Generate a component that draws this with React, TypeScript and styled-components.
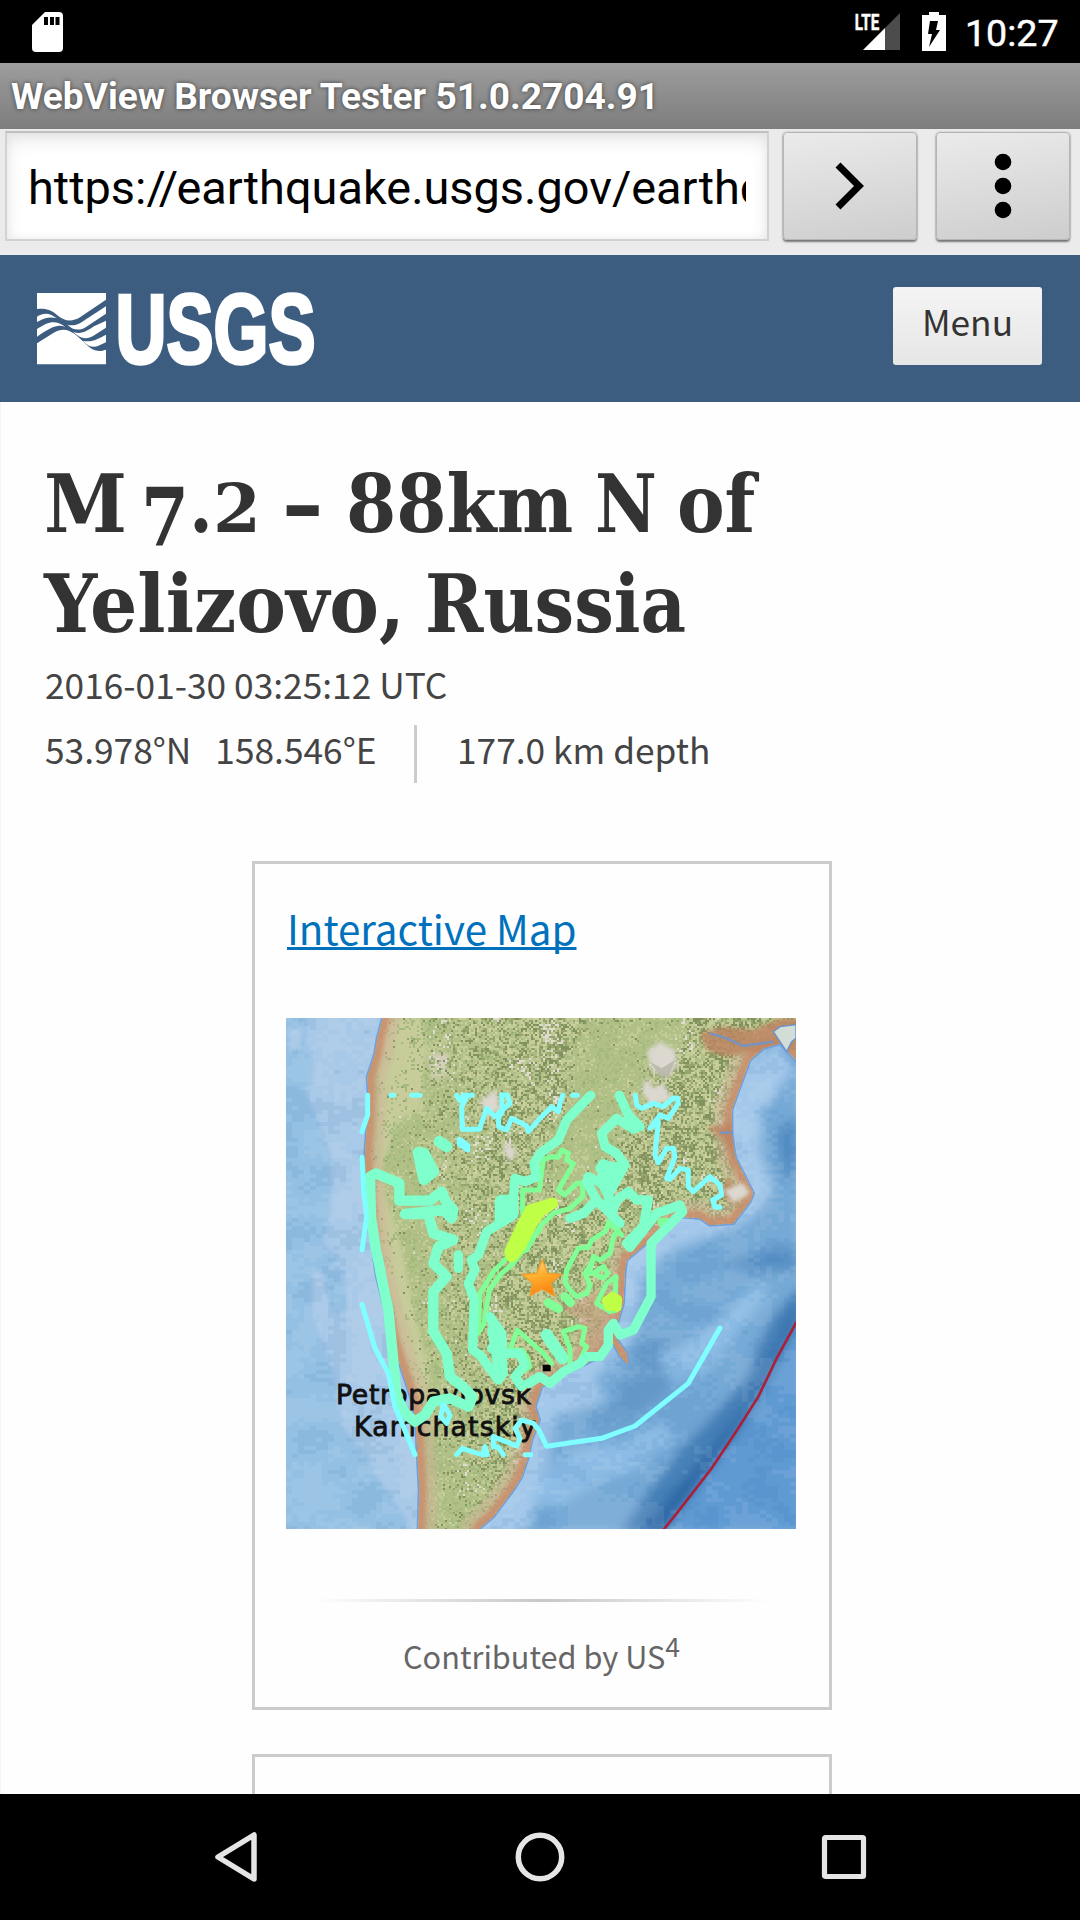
import React from "react";
import styled, { createGlobalStyle } from "styled-components";

const GlobalStyle = createGlobalStyle`
  html, body { margin: 0; padding: 0; background: #000; }
  * { box-sizing: border-box; }
`;

const body = `"Noto Sans CJK SC", "Noto Sans", sans-serif`;
const system = `Roboto, "Noto Sans", sans-serif`;

const Screen = styled.div`
  width: 1080px;
  height: 1920px;
  display: flex;
  flex-direction: column;
  overflow: hidden;
  background: #fefefe;
`;

const StatusBar = styled.div`
  flex: none;
  height: 63px;
  display: flex;
  align-items: center;
  padding: 0 21px 0 32px;
  background: #000;
  color: #fff;
`;

const StatusIcons = styled.div`
  margin-left: auto;
  display: flex;
  align-items: center;
  svg { overflow: visible; }
`;

const Clock = styled.span`
  width: 94px;
  margin-left: 19px;
  padding-top: 3px;
  font: 400 37.6px/44px ${system};
  -webkit-text-stroke: 0.5px #fff;
`;

const TitleBar = styled.div`
  flex: none;
  height: 66px;
  padding: 1px 11px 0;
  background: linear-gradient(#9d9d9d, #7d7d7d);
  color: #fff;
  font: 700 37.05px/65px ${system};
  text-shadow: 0 0 4px rgba(40, 40, 40, 0.8);
  white-space: nowrap;
`;

const AddressBar = styled.div`
  flex: none;
  height: 126px;
  display: flex;
  align-items: flex-start;
  padding: 2px 9px 0 5px;
  background: #ebebeb;
`;

const UrlField = styled.div`
  width: 764px;
  height: 110px;
  padding: 0 21px;
  border: 2px solid #d2d2d2;
  border-top-color: #bfbfbf;
  background: #fff;
  box-shadow: inset 0 8px 20px -4px #dedede, inset 0 0 10px #f0f0f0;
`;

const UrlText = styled.div`
  overflow: hidden;
  white-space: nowrap;
  color: #000;
  font: 400 46.9px/110px ${system};
`;

const Slashes = styled.span`
  letter-spacing: -1.8px;
`;

const ToolButton = styled.button<{ $gap: number }>`
  width: 134px;
  height: 108px;
  margin: 1px 0 0 ${(p) => p.$gap}px;
  padding: 0;
  display: flex;
  align-items: center;
  justify-content: center;
  border: 1px solid #b5b5b5;
  border-radius: 4px;
  background: linear-gradient(170deg, #ebebeb, #cdcdcd);
  box-shadow: 0 2px 2px #777, 0 0 2px #aaa;
`;

const SiteHeader = styled.header`
  flex: none;
  height: 147px;
  display: flex;
  align-items: flex-start;
  justify-content: space-between;
  padding: 32px 38px 0 37px;
  background: #3d5d80;
`;

const Logo = styled.svg`
  margin-top: 3px;
  overflow: visible;
`;

const MenuButton = styled.button`
  width: 149px;
  height: 78px;
  padding: 0 0 11px;
  border: 0;
  border-radius: 3px;
  background: linear-gradient(#f4f4f4, #e6e6e6);
  color: #333;
  font: 400 35.3px/60px ${body};
`;

const Page = styled.main`
  flex: 1;
  min-height: 0;
  overflow: hidden;
  padding: 52px 45px 0 43px;
  display: flex;
  flex-direction: column;
  border-left: 1px solid #f5f5f5;
`;

const Heading = styled.h1`
  margin: 0;
  color: #333;
  font: 700 80px/100px "DejaVu Serif Condensed", "DejaVu Serif", serif;
`;

const HeadingLine = styled.span`
  display: flex;
  white-space: pre;
`;

const Word = styled.span<{ $advance: number; $scale: number }>`
  flex: none;
  width: ${(p) => p.$advance}px;
  transform: scaleX(${(p) => p.$scale});
  transform-origin: left;
`;

const OldSeven = styled.span`
  display: inline-block;
  line-height: 0;
  transform: translateY(14px);
`;

const OldTwo = styled.span`
  display: inline-block;
  line-height: 0;
  transform: scaleY(0.84);
  transform-origin: 50% 28px;
`;

const Meta = styled.div`
  flex: none;
  height: 58px;
  padding-left: 1px;
  color: #444;
  font: 400 35.3px/59px ${body};
  white-space: pre;
`;

const Location = styled(Meta)`
  margin-top: 13px;
  display: flex;
  line-height: 47px;
`;

const Coordinates = styled.div`
  width: 372px;
  display: flex;
  gap: 24px;
  border-right: 3px solid #ccc;
  margin-right: 40px;
`;

const Card = styled.section`
  flex: none;
  width: 580px;
  margin: 78px 0 0 208px;
  padding: 34px 31px 26px;
  border: 3px solid #ccc;
  background: #fefefe;

  & + & {
    height: 400px;
    margin-top: 44px;
  }
`;

const MapLink = styled.a`
  display: block;
  width: max-content;
  height: 60px;
  margin-left: 1px;
  color: #0071bc;
  font: 400 40.3px/60px ${body};
  text-decoration: underline;
  text-decoration-thickness: 3px;
  text-underline-offset: 2px;
  text-decoration-skip-ink: none;
`;

const MapFrame = styled.div`
  width: 510px;
  height: 511px;
  margin-top: 60px;
  svg { display: block; }
`;

const Rule = styled.div`
  height: 3px;
  margin: 70px 29px 29px;
  background: linear-gradient(90deg, transparent, #c8c8c8, transparent);
`;

const Credit = styled.div`
  height: 50px;
  padding-right: 1px;
  text-align: center;
  color: #666;
  font: 400 30.7px/50px ${body};
  sup { font-size: 26.5px; line-height: 0; vertical-align: 12.5px; }
`;

const NavBar = styled.nav`
  flex: none;
  height: 126px;
  display: flex;
  align-items: center;
  justify-content: space-between;
  padding: 0 211px;
  background: #000;
`;

const SdCard = () => (
  <svg width="31" height="40" viewBox="0 0 31 40">
    <path fill="#fff" d="M13 0H27a4 4 0 0 1 4 4V36a4 4 0 0 1-4 4H4a4 4 0 0 1-4-4V13Z" />
    <path fill="#000" d="M12 5h4v8h-4zM18 5h4v8h-4zM23.5 5h4v8h-4z" />
  </svg>
);

const Signal = () => (
  <svg width="47" height="38" viewBox="0 0 47 38">
    <path fill="#4c4c4c" d="M46 0V37H31V15Z" />
    <path fill="#fff" d="M9 37 31 15V37Z" />
    <text x="0.8" y="17" fill="#fff" stroke="#fff" strokeWidth=".5" fontFamily="Roboto, sans-serif" fontWeight="700" fontSize="22.5" textLength="24.5" lengthAdjust="spacingAndGlyphs">LTE</text>
  </svg>
);

const Battery = () => (
  <svg width="24" height="39" viewBox="0 0 24 39" style={{ marginLeft: 21 }}>
    <path fill="#fff" d="M7 0H17V3H24V39H0V3H7Z" />
    <path fill="#000" d="M8 9H16L14 18H18L7 35 10 22H6Z" />
  </svg>
);

const UsgsLogo = () => (
  <Logo width="282" height="76" viewBox="0 0 282 76">
    <g fill="#fff" transform="translate(-37 -40) scale(.33333)">
      <path d="M111 129H318V149L240 202C215 217 193 214 170 194C150 178 135 175 111 177Z" />
      <path d="M111 200C135 184 152 192 170 204C150 200 135 202 111 216Z" />
      <path d="M111 237C145 216 163 208 196 230C170 222 155 230 111 260Z" />
      <path d="M111 280L160 249C185 234 204 237 225 253C262 282 275 314 318 299V343H111Z" />
      <path d="M202 224C228 231 245 216 265 203L318 169V191L258 231C238 244 218 240 202 224Z" />
      <path d="M219 245C243 255 262 243 282 229L318 212V233L278 259C255 270 238 264 219 245Z" />
      <path d="M248 272C275 279 294 266 318 254V277L292 289C275 293 260 286 248 272Z" />
    </g>
    <text x="78.5" y="73" fill="#fff" stroke="#fff" strokeWidth="3.6" fontFamily="'Liberation Sans', Arial, sans-serif" fontWeight="700" fontSize="98.5" textLength="200" lengthAdjust="spacingAndGlyphs">USGS</text>
  </Logo>
);

const CELL = 6;
const COAST =
  "M330 -120L308 24 292 85 285 130 272 170 262 200 265 250 262 330 255 430 258 520 268 620 278 720 290 800 315 900 340 1000 365 1080 395 1170 408 1240 412 1330 418 1440 415 1554V1700H560L600 1554 640 1520 700 1440 725 1400 745 1340 755 1290 778 1230 765 1190 785 1130 820 1110 880 1080 940 1050 1000 1000 1022 1040 1045 1065 1040 1030 1005 980 1015 930 1030 880 1035 780 1040 750 1100 700 1140 670 1200 620 1260 625 1290 645 1360 640 1410 575 1420 550 1395 500 1365 440 1355 370 1355 300 1380 230 1410 150 1450 115 1500 100 1548 150H1700V-120Z";

const hash = (x: number, y: number, s: number) => {
  let h = (x * 374761393 + y * 668265263 + s * 974634777) | 0;
  h = Math.imul(h ^ (h >>> 13), 1274126177);
  return ((h ^ (h >>> 16)) >>> 0) / 4294967296;
};

const smooth = (x: number, y: number, s: number) => {
  const ix = Math.floor(x);
  const iy = Math.floor(y);
  const fx = x - ix;
  const fy = y - iy;
  const a = hash(ix, iy, s) * (1 - fx) + hash(ix + 1, iy, s) * fx;
  const b = hash(ix, iy + 1, s) * (1 - fx) + hash(ix + 1, iy + 1, s) * fx;
  return a * (1 - fy) + b * fy;
};

const bump = (x: number, y: number, cx: number, cy: number, rx: number, ry: number) =>
  Math.max(0, 1 - ((x - cx) / rx) ** 2 - ((y - cy) / ry) ** 2);

/* Relief shading: one path of small squares for each tone of the terrain. */
const buildRelief = () => {
  const tones: Record<string, string[]> = {};
  const put = (tone: string, x: number, y: number) =>
    (tones[tone] = tones[tone] || []).push(`M${x} ${y}h6v6h-6z`);
  for (let y = 24; y < 1556; y += CELL) {
    for (let x = 250; x < 1548; x += CELL) {
      const valley = bump(x, y, 985, 200, 150, 230) + bump(x, y, 900, 430, 110, 190) + bump(x, y, 1140, 60, 100, 90);
      const west = Math.max(0, Math.min(1, (x - 380 - Math.max(0, y - 850) * 0.12) / 320));
      const rough = Math.max(0.06, west * (1 - valley * 1.6)) * (0.5 + smooth(x / 70, y / 70, 4) * 0.6);
      const r = hash(x, y, 1);
      if (r < rough) {
        const t = hash(x, y, 2) * 0.55 + smooth(x / 15, y / 15, 7) * 0.45;
        const high = smooth(x / 55, y / 55, 9) + bump(x, y, 650, 270, 70, 100) * 0.3 + bump(x, y, 480, 170, 60, 60) * 0.3;
        if (t < 0.34) put("#82925f", x, y);
        else if (t < 0.5) put("#96a56d", x, y);
        else if (t < 0.66) put("#c0ca94", x, y);
        else if (high > 0.7) put("#e0dbd0", x, y);
        else if (t < 0.8) put("#cccfa0", x, y);
        else put("#a8b981", x, y);
      } else if (hash(x, y, 6) < 0.24) {
        put(smooth(x / 40, y / 40, 3) > 0.5 ? "#c3cb97" : "#a3b97d", x, y);
      }
    }
  }
  return Object.entries(tones).map(([fill, d]) => ({ fill, d: d.join("") }));
};

const buildSea = () => {
  const tones: Record<string, string[]> = { "#ffffff": [], "#2565a8": [] };
  for (let y = 24; y < 1556; y += 12) {
    for (let x = 18; x < 1548; x += 18) {
      const n = smooth(x / 80, y / 60, 12) + (hash(x, y, 8) - 0.5) * 0.3;
      if (n > 0.6) tones["#ffffff"].push(`M${x} ${y}h18v12h-18z`);
      if (n < 0.33) tones["#2565a8"].push(`M${x} ${y}h18v12h-18z`);
    }
  }
  return Object.entries(tones).map(([fill, d]) => ({ fill, d: d.join("") }));
};

const relief = buildRelief();
const sea = buildSea();

const EarthquakeMap = () => (
  <svg width="510" height="511" viewBox="18 24 1530 1533" preserveAspectRatio="none">
    <defs>
      <clipPath id="land"><path d={COAST} /></clipPath>
      <filter id="soft" x="-20%" y="-20%" width="140%" height="140%"><feGaussianBlur stdDeviation="16" /></filter>
      <filter id="haze" x="-20%" y="-20%" width="140%" height="140%"><feGaussianBlur stdDeviation="7" /></filter>
      <linearGradient id="star" x1="0" y1="0" x2="0.3" y2="1">
        <stop offset="0" stopColor="#ffe08a" /><stop offset=".5" stopColor="#ffb02e" /><stop offset="1" stopColor="#f98512" />
      </linearGradient>
    </defs>
    <rect x="18" y="24" width="1530" height="1533" fill="#a9c9e8" />
    <g filter="url(#haze)" fill="#94c0e3">
      <path d="M0 0H75L80 90 105 150 100 215 70 235 95 290 130 370 155 430 155 600 130 700 175 740 135 790 95 900 130 1000 160 1090 190 1250 250 1330 290 1400 360 1500 400 1560H0Z" />
      <path d="M110 780H190L205 900 170 910 130 860Z" />
    </g>
    <path filter="url(#haze)" fill="#adcbe9" d="M30 60L70 50 60 110 30 130ZM95 780L130 790 150 900 100 910Z" />
    <g filter="url(#soft)">
      <path fill="#75a9d6" d="M1450 100L1560 80V1570H700L760 1400 785 1130 1000 1000 1045 740 1200 620 1360 640 1420 550 1360 380 1370 230Z" />
      <path fill="#a3c8ea" d="M1370 200L1500 100 1540 180 1450 300 1430 420 1480 540 1410 630 1260 690 1150 730 1080 800 1080 900 1040 1020 940 1110 980 1170 830 1210 820 1300 800 1400 740 1570 600 1560 745 1340 785 1130 1000 1000 1040 740 1200 620 1360 640 1420 550 1360 380Z" />
      <path fill="#5690c5" d="M1480 370L1560 310V480L1510 520ZM1320 760L1500 710 1560 740V780L1400 790Z" />
      <path fill="#699dcb" d="M1090 980L1180 990 1240 1030 1320 1000 1200 1110 1130 1170 1040 1230 930 1240 900 1220 1000 1190Z" />
      <path fill="#8cbce5" d="M1130 1030L1210 1010 1330 920 1420 830 1480 820 1400 930 1290 1080 1180 1130ZM830 1340L1020 1290 1140 1240 1190 1290 1080 1370 920 1430 810 1500 760 1460Z" />
      <path fill="#4780b8" d="M1570 820L1470 930 1400 1100 1290 1230 1200 1320 1080 1480 1020 1570H1170L1300 1400 1430 1180 1570 950Z" />
      <path fill="#2c66a4" d="M1560 880L1500 990 1400 1190 1290 1320 1180 1450 1090 1560H1150L1290 1390 1400 1220 1550 930Z" />
      <path fill="#5f9ad3" d="M1570 910L1440 1160 1340 1310 1150 1570H1570Z" />
    </g>
    <g shapeRendering="crispEdges">
      {sea.map((t) => <path key={t.fill} d={t.d} fill={t.fill} opacity=".08" />)}
    </g>
    <path d={COAST} fill="none" stroke="#6f9fdc" strokeWidth="10" />
    <g clipPath="url(#land)">
      <rect x="18" y="24" width="1530" height="1533" fill="#b0c086" />
      <path filter="url(#haze)" fill="#c8cc9b" d="M300 20H420L440 100 420 300 350 330 300 500 360 700 400 900 450 1100 420 1200 360 1000 290 700Z" />
      <path filter="url(#haze)" fill="#d4cebb" d="M445 130L510 130 500 200 455 210Z" />
      <g shapeRendering="crispEdges">
        {relief.map((t) => <path key={t.fill} d={t.d} fill={t.fill} />)}
      </g>
      <path d={COAST} fill="none" stroke="#cfb39a" strokeWidth="105" opacity=".5" filter="url(#haze)" />
      <path d={COAST} fill="none" stroke="#c98d6c" strokeWidth="44" opacity=".85" filter="url(#haze)" />
      <path fill="#bd8562" filter="url(#haze)" opacity=".85" d="M1260 70L1330 50 1420 60 1500 24H1560V120L1400 130 1340 140 1280 120ZM1360 340L1280 350 1340 400 1380 470ZM1380 590L1350 500 1310 550Z" />
      <path fill="#c79b81" filter="url(#haze)" opacity=".6" d="M830 890L880 880 980 830 1010 930 950 1020 880 1060 900 930Z" />
      <g fill="#dcd8d0" filter="url(#haze)">
        <path d="M1100 125L1140 95 1185 120 1192 165 1165 205 1115 180ZM1085 240L1100 200 1120 235 1150 220 1180 270 1110 285ZM1330 540L1390 520 1410 550 1360 580ZM600 270L650 240 660 300 620 320ZM680 390L710 430 690 460 670 420Z" />
      </g>
      <g fill="#aaa69d"><path d="M1110 155L1145 175 1185 150 1168 195 1145 205Z" opacity=".6" /></g>
    </g>
    <path fill="#d2ddd5" stroke="#6591cf" strokeWidth="4" d="M1480 65L1500 50 1548 44V85L1535 95 1520 125 1500 95Z" />
    <path fill="none" stroke="#7693c4" strokeWidth="7" d="M1290 70L1340 85 1390 108 1480 95M1320 368H1360" />
    <path fill="none" stroke="#ab2039" strokeWidth="8" d="M1550 935L1490 1045 1435 1160 1365 1270 1295 1375 1190 1510 1150 1560" />

    <g fill="#111" stroke="#111" strokeWidth="2.5" fontFamily="'DejaVu Sans', sans-serif" fontSize="80">
      <text x="168" y="1183" textLength="585" lengthAdjust="spacing">Petropavlovsk</text>
      <text x="222" y="1277" textLength="545" lengthAdjust="spacing">Kamchatskiy</text>
    </g>
    <path fill="#000" d="M788 1064H812V1084H788Z" />

    <g fill="none" strokeLinecap="round" strokeLinejoin="round">
      <g stroke="#7fff95" strokeWidth="15">
        <path d="M728 610V540H778L790 450 810 440 835 442 845 420 865 430 860 450 880 462 835 540 853 555 890 520 908 520 908 560 870 595 820 610 780 650 740 720 680 745 640 785 600 850 594 970 612 940 628 840 665 790 700 760 740 700 780 660" />
        <path d="M860 780L895 715 925 712 935 690 975 665 985 640 1015 660 1000 680 990 730 960 750 940 740 928 790M985 635L1025 675M860 780L855 815 870 840 890 860 920 850 930 825 915 790 940 750M940 790L970 770 985 790 970 805Z" />
        <path d="M950 880L980 820 1008 800 1005 870 1010 900 990 905Z" />
        <path d="M690 1020L712 960 745 990 790 1030 815 1060M690 1020L725 1020 740 1040 750 1070 735 1080M850 965L895 950 915 955 905 1000 920 1010 890 1070 870 1065 870 1015Z" />
      </g>
      <path stroke="#7fff95" strokeWidth="26" d="M804 878L836 896M855 860L872 878M1145 636L1160 636 1155 650Z" />
      <g stroke="#7fffcb" strokeWidth="28">
        <path strokeWidth="31" d="M302 785L288 720 273 620 270 500 287 490 358 520 358 572H450L485 545 498 575 520 600 515 625 490 600 375 612H445L460 670 520 690 475 710 460 760 500 800 460 845V965L500 1030 510 1100 548 1130 578 1160 565 1190 510 1165 460 1175 435 1215 405 1235 375 1210 350 1160 335 1000 325 900 300 780" />
        <path d="M415 428L432 430 460 485 432 508ZM478 395L500 410" strokeWidth="34" />
        <path d="M932 256L860 330 835 390 780 430 762 460 770 500 735 515 705 505 700 570 665 575 660 640 695 600 660 640 620 665 595 735 575 750 585 780 565 820 583 870 578 1020 600 1035 640 1090 655 1110 670 1090 665 1020 635 1015 660 990 630 920 665 970 670 1030 720 1030 735 1065 705 1100 725 1130" />
        <path d="M665 575H695V610L665 630Z" strokeWidth="42" />
        <path d="M1018 256L1045 315 1080 350 1060 357 1010 325 965 370 975 410 1010 430 1035 465 1010 510 985 555 965 520 925 500 920 515 950 570 910 610 870 625M960 475L1010 470 985 560M950 570L1020 640M980 580L1000 600 1010 570 1045 545 1070 570 1105 570 1090 650 1040 700 1050 712 1130 610 1200 585 1208 605 1113 700V860L1060 960 1020 975 1000 940 985 960 985 1005 960 1040 920 1040 900 1060 850 1085 810 1120 780 1100 745 1120" />
        <path strokeWidth="36" d="M970 465L1010 480 970 520ZM800 975L848 1045M640 960L660 1080" />
        <path d="M535 735V775" />
      </g>
      <path stroke="#bfff45" strokeWidth="34" d="M752 600L725 650 690 725 695 740 720 710 755 640 780 605 818 580Z" fill="#bfff45" />
      <path stroke="#bfff45" strokeWidth="25" fill="#bfff45" d="M978 872L998 858 1014 868 1012 892 985 890Z" />
      <g stroke="#7fffff" strokeWidth="15">
        <path d="M263 256V315L246 365M246 442L252 550 260 620 246 720M246 883L285 1015 325 1090 345 1190 405 1334M333 256H341M395 256H420M530 256L540 272 550 256H577M560 262L545 290 547 358H598L620 295 645 320 690 280 682 255H665L667 305 655 325 656 350 680 360 695 325 740 348 745 365 780 325 815 290 835 305 840 280 848 256M878 256H892" />
        <path d="M538 388L563 406V420L538 402ZM1066 256L1070 285 1085 295 1120 280 1150 290 1180 264H1192L1195 280 1165 325 1140 315 1110 355 1135 335 1125 435 1135 458 1160 415 1180 415 1185 440 1160 505 1170 508 1200 475 1225 480V530L1240 545 1290 500 1320 525 1325 555 1298 570 1305 592H1320" />
        <path d="M490 1182L510 1215 500 1240 482 1220ZM530 1334L547 1315 598 1332M608 1334L615 1310 622 1334ZM670 1334L655 1312 640 1310V1280L710 1308 720 1285 705 1255 725 1230 760 1240 777 1260 800 1309 965 1285 1065 1248 1225 1120 1320 954M735 1334H752" />
      </g>
    </g>
    <path fill="url(#star)" stroke="#f39a2c" strokeWidth="4" strokeLinejoin="round" d="M787 750L803 790 845 793 813 820 824 858 786 837 750 858 758 819 725 793 770 790Z" />
  </svg>
);

export default function App() {
  return (
    <Screen>
      <GlobalStyle />
      <StatusBar>
        <SdCard />
        <StatusIcons>
          <Signal />
          <Battery />
          <Clock>10:27</Clock>
        </StatusIcons>
      </StatusBar>
      <TitleBar>WebView Browser Tester 51.0.2704.91</TitleBar>
      <AddressBar>
        <UrlField><UrlText>https:<Slashes>//</Slashes>earthquake.usgs.gov/earthq</UrlText></UrlField>
        <ToolButton $gap={14} aria-label="Go">
          <svg width="34" height="52" viewBox="0 0 34 52"><path d="M5 5 26 26 5 47" fill="none" stroke="#000" strokeWidth="7" /></svg>
        </ToolButton>
        <ToolButton $gap={19} aria-label="More">
          <svg width="18" height="66" viewBox="0 0 18 66"><circle cx="9" cy="9" r="8.3" /><circle cx="9" cy="33" r="8.3" /><circle cx="9" cy="57" r="8.3" /></svg>
        </ToolButton>
      </AddressBar>
      <SiteHeader>
        <UsgsLogo />
        <MenuButton>Menu</MenuButton>
      </SiteHeader>
      <Page>
        <Heading>
          <HeadingLine>
            <Word $advance={97} $scale={1.042}>M </Word>
            <Word $advance={139.5} $scale={0.957}><OldSeven>7</OldSeven>.<OldTwo>2</OldTwo> </Word>
            <Word $advance={65.5} $scale={1.45}>- </Word>
            <Word $advance={248.5} $scale={1.004}>88km </Word>
            <Word $advance={82} $scale={0.939}>N </Word>
            <Word $advance={90} $scale={0.992}>of </Word>
          </HeadingLine>
          <HeadingLine>
            <Word $advance={381} $scale={1.035}>Yelizovo, </Word>
            <Word $advance={270} $scale={0.977}>Russia</Word>
          </HeadingLine>
        </Heading>
        <Meta>2016-01-30 03:25:12 UTC</Meta>
        <Location>
          <Coordinates><span>53.978°N</span><span>158.546°E</span></Coordinates>
          <span>177.0 km depth</span>
        </Location>
        <Card>
          <MapLink>Interactive Map</MapLink>
          <MapFrame><EarthquakeMap /></MapFrame>
          <Rule />
          <Credit>Contributed by US<sup>4</sup></Credit>
        </Card>
        <Card />
      </Page>
      <NavBar>
        <svg width="50" height="54" viewBox="0 0 50 54"><path d="M43 5V49L7 27Z" fill="none" stroke="#e5e5e5" strokeWidth="5.5" strokeLinejoin="round" /></svg>
        <svg width="50" height="50" viewBox="0 0 50 50"><circle cx="25" cy="25" r="21.7" fill="none" stroke="#e5e5e5" strokeWidth="5.5" /></svg>
        <svg width="50" height="50" viewBox="0 0 50 50"><rect x="5.5" y="5.5" width="39" height="39" rx="1" fill="none" stroke="#e5e5e5" strokeWidth="5.2" /></svg>
      </NavBar>
    </Screen>
  );
}
